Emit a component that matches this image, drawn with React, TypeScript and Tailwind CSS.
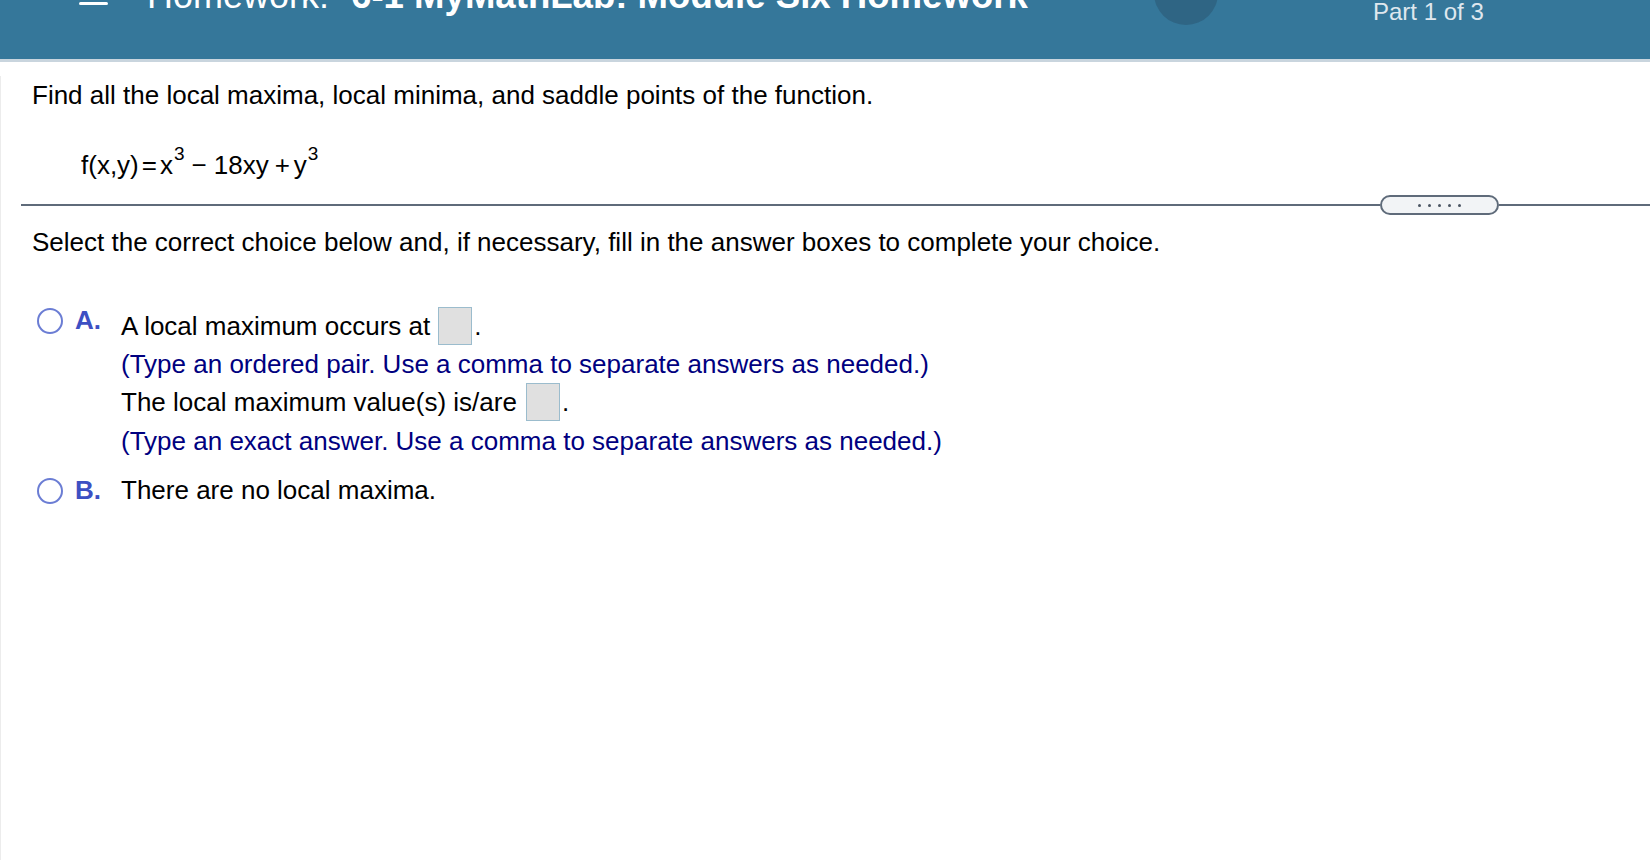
import React from "react";

const FONT = { fontFamily: '"Liberation Sans", Arial, sans-serif' };

function AnswerBox({ className = "" }: { className?: string }) {
  return (
    <span
      className={`inline-block w-[34px] h-[38px] bg-[#e0e0e0] border border-[#9bbccd] ${className}`}
    />
  );
}

function Radio() {
  return (
    <span className="inline-block w-[26px] h-[26px] rounded-full border-[2px] border-[#6b7dd4] bg-white shrink-0" />
  );
}

export default function App() {
  return (
    <div className="w-full h-[860px] bg-white overflow-hidden text-black" style={FONT}>
      {/* top bar */}
      <header className="h-[62px] bg-[#35779a] border-b-[3px] border-[#c9d5de] flex items-start overflow-hidden">
        <div className="ml-[79px] mt-[-16px] w-[29px] flex flex-col gap-[6px] shrink-0">
          <span className="h-[3px] bg-white rounded-sm" />
          <span className="h-[3px] bg-white rounded-sm" />
          <span className="h-[3px] bg-white rounded-sm" />
        </div>
        <div className="ml-[39px] mt-[-22px] w-[1007px] shrink-0 text-[36px] leading-none text-white whitespace-nowrap">
          <span>Homework:</span>
          <span className="ml-[22px] font-bold text-[36.6px]">6-1 MyMathLab: Module Six Homework</span>
        </div>
        <div className="mt-[-39px] w-[64px] h-[64px] rounded-full bg-[#2f6584] shrink-0 flex items-end justify-center">
          <svg width="14" height="46" viewBox="0 0 14 46" className="mb-[21px]">
            <path d="M10 28 L4 34 L10 40" stroke="white" strokeWidth="3" fill="none" strokeLinecap="round" />
          </svg>
        </div>
        <div className="ml-[155px] text-[24px] leading-none text-[#dfe7ee] whitespace-nowrap">Part 1 of 3</div>
      </header>

      <main className="border-l border-[#ececec] h-full text-[26px] leading-[38px]">
        <p className="ml-[31px] mt-[14px]">
          Find all the local maxima, local minima, and saddle points of the function.
        </p>

        <p className="ml-[80px] mt-[32px] text-[26px] whitespace-nowrap">
          f(x,y)
          <span className="ml-[3px]">=</span>
          <span className="ml-[3px]">x</span>
          <sup className="text-[19px] relative top-[-14px] ml-[1px]">3</sup>
          <span className="ml-[7px]">−</span>
          <span className="ml-[7px]">18xy</span>
          <span className="ml-[6px]">+</span>
          <span className="ml-[4px]">y</span>
          <sup className="text-[19px] relative top-[-14px] ml-[1px]">3</sup>
        </p>

        <div className="mt-[11px] ml-[20px] flex items-center h-[20px]">
          <span className="flex-1 h-[2px] bg-[#5f6b7a]" />
          <span className="w-[119px] h-[20px] rounded-full border-2 border-[#5f6b7a] bg-[#f2f4f6] flex items-center justify-center gap-[7px]">
            <span className="w-[3px] h-[3px] rounded-full bg-[#4b5563]" />
            <span className="w-[3px] h-[3px] rounded-full bg-[#4b5563]" />
            <span className="w-[3px] h-[3px] rounded-full bg-[#4b5563]" />
            <span className="w-[3px] h-[3px] rounded-full bg-[#4b5563]" />
            <span className="w-[3px] h-[3px] rounded-full bg-[#4b5563]" />
          </span>
          <span className="w-[151px] h-[2px] bg-[#5f6b7a]" />
        </div>

        <p className="ml-[31px] mt-[8px]">
          Select the correct choice below and, if necessary, fill in the answer boxes to complete your choice.
        </p>

        {/* choice A */}
        <div className="mt-[46px] flex items-start">
          <div className="ml-[36px] mt-[-1px]">
            <Radio />
          </div>
          <span className="ml-[12px] mt-[-6px] w-[46px] text-[26px] font-bold text-[#3d50c3]">A.</span>
          <div className="flex flex-col">
            <div className="flex items-center h-[38px]">
              <span>A local maximum occurs at</span>
              <AnswerBox className="ml-[8px]" />
              <span className="ml-[2px]">.</span>
            </div>
            <div className="h-[37px] text-[#000080]">
              (Type an ordered pair. Use a comma to separate answers as needed.)
            </div>
            <div className="flex items-center h-[40px]">
              <span>The local maximum value(s) is/are</span>
              <AnswerBox className="ml-[9px]" />
              <span className="ml-[2px]">.</span>
            </div>
            <div className="h-[38px] text-[#000080]">
              (Type an exact answer. Use a comma to separate answers as needed.)
            </div>
          </div>
        </div>

        {/* choice B */}
        <div className="mt-[11px] flex items-center h-[38px]">
          <div className="ml-[36px] mt-[2px] flex">
            <Radio />
          </div>
          <span className="ml-[12px] w-[46px] font-bold text-[#3d50c3]">B.</span>
          <span>There are no local maxima.</span>
        </div>
      </main>
    </div>
  );
}
